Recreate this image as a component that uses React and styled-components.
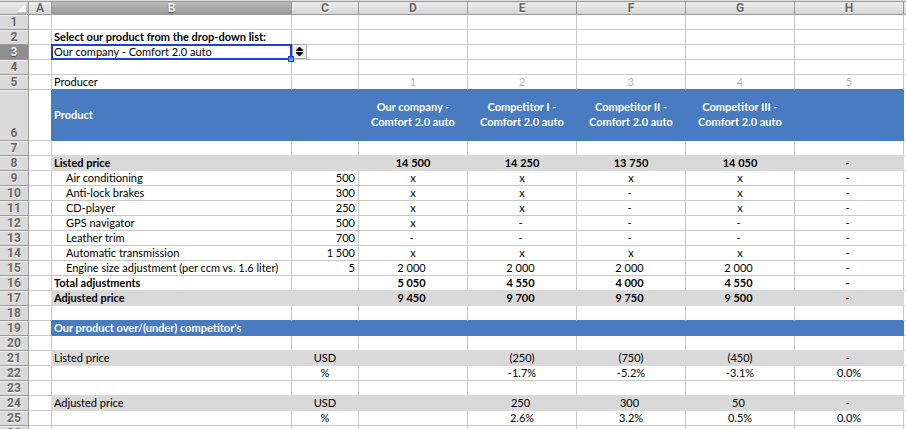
import { useRef, useState } from 'react';
import styled, { createGlobalStyle, css } from 'styled-components';

const BLUE = '#487bc0';
const GRAY = '#d9d9d9';
const GRID = '#c9c9c9';
const EDGE = '#999999';

const GlobalStyle = createGlobalStyle`
  body {
    margin: 0;
    background: #fff;
  }
`;

const Sheet = styled.main`
  height: 100vh;
  overflow: hidden;
  border-top: 1px solid #dedede;
  box-sizing: border-box;
`;

const Grid = styled.table`
  width: 100%;
  table-layout: fixed;
  border-collapse: separate;
  border-spacing: 0;
  font-family: Lato, sans-serif;
  font-size: 11px;
  line-height: 14px;
  color: #000;
`;

const Col = styled.col`
  width: ${({ $width }) => ($width ? `${$width}px` : 'auto')};
`;

const headerText = css`
  padding: 0;
  font-family: Roboto, sans-serif;
  font-size: 12px;
  font-weight: 700;
  line-height: 12px;
  text-align: center;
  color: #666;
  text-shadow: 0 1px 0 #fff;
`;

const ColumnHeader = styled.th`
  ${headerText}
  height: 12px;
  border-top: 1px solid ${EDGE};
  border-bottom: 1px solid ${EDGE};
  border-right: 1px solid ${EDGE};
  background: linear-gradient(#ececec, #d6d6d6);

  &:last-child {
    border-right: 0;
  }

  ${({ $active }) =>
    $active &&
    css`
      color: #f4f4f4;
      text-shadow: 0 1px 1px #555;
      background: linear-gradient(#bababa, #9a9a9a);
    `}
`;

const Corner = styled(ColumnHeader)`
  svg {
    display: block;
    margin-left: 16px;
  }
`;

const RowHeader = styled.th`
  ${headerText}
  height: ${({ $height }) => $height - 1}px;
  line-height: 14px;
  vertical-align: bottom;
  border-bottom: 1px solid ${EDGE};
  border-right: 1px solid ${EDGE};
  background: #dadada;
  box-shadow: inset 0 1px 0 #ededed;

  ${({ $active }) =>
    $active &&
    css`
      color: #f4f4f4;
      text-shadow: 0 1px 1px #444;
      background: #8e8e8e;
      box-shadow: none;
    `}
`;

const Cell = styled.td`
  position: relative;
  padding: 0 2px;
  vertical-align: middle;
  white-space: pre-line;
  text-align: ${({ $align }) => $align || 'left'};
  font-weight: ${({ $bold }) => ($bold ? 700 : 400)};
  color: ${({ $color }) => $color || '#000'};
  background: ${({ $fill }) => $fill || '#fff'};
  border-right: 1px solid ${({ $right }) => $right || GRID};
  border-bottom: 1px solid ${({ $bottom }) => $bottom || GRID};

  ${({ $indent }) => $indent && 'padding-left: 14px;'}
  ${({ $align }) => $align === 'right' && 'padding-right: 3px;'}
  ${({ $signed }) => $signed && 'padding-right: 5px;'}
  ${({ $tall }) =>
    $tall &&
    css`
      padding-bottom: 2px;
      line-height: 15px;
    `}
`;

const Picker = styled.div`
  position: absolute;
  z-index: 1;
  inset: -1px;
  display: flex;
  border: 2px solid #1f3fd0;
`;

const ProductSelect = styled.select`
  flex: 1;
  min-width: 0;
  height: 12px;
  margin: 0;
  padding: 0 1px;
  border: 0;
  outline: 0;
  appearance: none;
  background: transparent;
  font: inherit;
  line-height: 12px;
  color: inherit;
`;

const FillHandle = styled.span`
  position: absolute;
  right: -4px;
  bottom: -4px;
  width: 4px;
  height: 4px;
  border: 1px solid #1f3fd0;
  background: linear-gradient(#2f7fe0, #6cc4ff);
`;

const PickerButton = styled.button`
  position: absolute;
  left: 100%;
  top: -2px;
  width: 15px;
  height: 15px;
  margin-left: 2px;
  padding: 0;
  display: flex;
  align-items: center;
  justify-content: center;
  border: 1px solid #aaa;
  background: #ededed;
`;

const products = [
  'Our company - Comfort 2.0 auto',
  'Competitor I - Comfort 2.0 auto',
  'Competitor II - Comfort 2.0 auto',
  'Competitor III - Comfort 2.0 auto',
];

const columns = ['A', 'B', 'C', 'D', 'E', 'F', 'G', 'H'];
const widths = [29, 23, 240, 67, null, null, null, null, null, 2];

// cells are listed from column B to column H
const rows = [
  {},
  { bold: true, cells: ['Select our product from the drop-down list:'] },
  { picker: true },
  {},
  { muted: true, cells: ['Producer', '', '1', '2', '3', '4', '5'] },
  {
    fill: BLUE,
    bold: true,
    height: 51,
    cells: [
      'Product',
      '',
      'Our company -\nComfort 2.0 auto',
      'Competitor I -\nComfort 2.0 auto',
      'Competitor II -\nComfort 2.0 auto',
      'Competitor III -\nComfort 2.0 auto',
    ],
  },
  {},
  { fill: GRAY, bold: true, cells: ['Listed price', '', '14 500', '14 250', '13 750', '14 050', '-'] },
  { indent: true, cells: ['Air conditioning', '500', 'x', 'x', 'x', 'x', '-'] },
  { indent: true, cells: ['Anti-lock brakes', '300', 'x', 'x', '-', 'x', '-'] },
  { indent: true, cells: ['CD-player', '250', 'x', 'x', '-', 'x', '-'] },
  { indent: true, cells: ['GPS navigator', '500', 'x', '-', '-', '-', '-'] },
  { indent: true, cells: ['Leather trim', '700', '-', '-', '-', '-', '-'] },
  { indent: true, cells: ['Automatic transmission', '1 500', 'x', 'x', 'x', 'x', '-'] },
  {
    indent: true,
    cells: ['Engine size adjustment (per ccm vs. 1.6 liter)', '5', '2 000', '2 000', '2 000', '2 000', '-'],
  },
  { bold: true, cells: ['Total adjustments', '', '5 050', '4 550', '4 000', '4 550', '-'] },
  { fill: GRAY, bold: true, cells: ['Adjusted price', '', '9 450', '9 700', '9 750', '9 500', '-'] },
  {},
  { fill: BLUE, bold: true, cells: ["Our product over/(under) competitor's"] },
  {},
  { fill: GRAY, unit: true, cells: ['Listed price', 'USD', '', '(250)', '(750)', '(450)', '-'] },
  { unit: true, cells: ['', '%', '', '-1.7%', '-5.2%', '-3.1%', '0.0%'] },
  {},
  { fill: GRAY, unit: true, cells: ['Adjusted price', 'USD', '', '250', '300', '50', '-'] },
  { unit: true, cells: ['', '%', '', '2.6%', '3.2%', '0.5%', '0.0%'] },
  {},
];

const alignOf = (row, index) => {
  if (index === 0) return 'left';
  if (index === 1 && !row.unit) return 'right';
  return 'center';
};

const colorOf = (row, index) => {
  if (row.fill === BLUE) return '#fff';
  if (row.muted && index > 0) return '#b3b3b3';
  return '#000';
};

// amounts and dashes keep room for a closing bracket on their right
const isSigned = (text, index) => index > 1 && /^(-|\d{2,3}|\d \d{3})$/.test(text || '');

const ProductPicker = () => {
  const [product, setProduct] = useState(products[0]);
  const selectRef = useRef(null);

  return (
    <Picker>
      <ProductSelect
        ref={selectRef}
        aria-label="Select our product"
        value={product}
        onChange={(e) => setProduct(e.target.value)}
      >
        {products.map((name) => (
          <option key={name}>{name}</option>
        ))}
      </ProductSelect>
      <PickerButton type="button" aria-label="Open product list" onClick={() => selectRef.current.showPicker()}>
        <svg width="9" height="11" viewBox="0 0 9 11">
          <path d="M4 1 H5 L8 4 V5 H1 V4 Z M1 6 H8 V7 L5 10 H4 L1 7 Z" fill="#000" />
        </svg>
      </PickerButton>
      <FillHandle />
    </Picker>
  );
};

const SheetRow = ({ row, next, number }) => {
  const bottom = row.fill || next?.fill;

  return (
    <tr>
      <RowHeader scope="row" $height={row.height || 15} $active={row.picker}>
        {number}
      </RowHeader>
      <Cell $right={row.fill} />
      {columns.slice(1).map((column, index) => (
        <Cell
          key={column}
          $fill={row.fill}
          $right={row.fill}
          $bottom={bottom}
          $bold={row.bold}
          $indent={row.indent && index === 0}
          $align={alignOf(row, index)}
          $color={colorOf(row, index)}
          $signed={isSigned(row.cells?.[index], index) && !row.muted}
          $tall={row.height}
        >
          {row.picker && index === 0 ? <ProductPicker /> : row.cells?.[index]}
        </Cell>
      ))}
      <Cell $right="#fff" />
    </tr>
  );
};

const App = () => (
  <Sheet>
    <GlobalStyle />
    <Grid>
      <colgroup>
        {widths.map((width, index) => (
          <Col key={index} $width={width} />
        ))}
      </colgroup>
      <thead>
        <tr>
          <Corner as="td">
            <svg width="12" height="12" viewBox="0 0 12 12">
              <path d="M10 1 V10 H1 Z" fill="#f6f6f6" />
              <path d="M11 1 V11 H1" fill="none" stroke="#a8a8a8" strokeWidth="1" />
            </svg>
          </Corner>
          {columns.map((column) => (
            <ColumnHeader key={column} scope="col" $active={column === 'B'}>
              {column}
            </ColumnHeader>
          ))}
          <ColumnHeader as="td" />
        </tr>
      </thead>
      <tbody>
        {rows.map((row, index) => (
          <SheetRow key={index} row={row} next={rows[index + 1]} number={index + 1} />
        ))}
      </tbody>
    </Grid>
  </Sheet>
);

export default App;
